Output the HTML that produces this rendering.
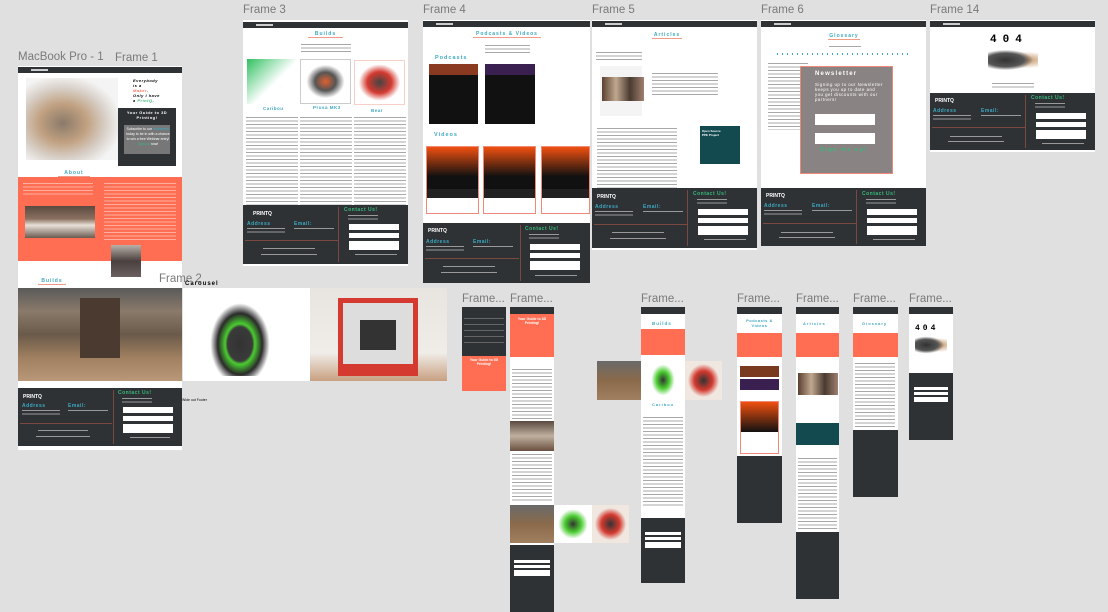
<!DOCTYPE html>
<html><head><meta charset="utf-8"><style>
*{margin:0;padding:0;box-sizing:border-box}
body{width:1108px;height:612px;background:#e0e0e0;position:relative;overflow:hidden;font-family:"Liberation Sans",sans-serif}
.a{position:absolute}
.lbl{position:absolute;font-size:11.5px;color:#7a7a7a;z-index:5}
.w{position:absolute;background:#fff}
.dk{background:#2e3235}
.co{background:#ff6e52}
.hd{position:absolute;left:0;right:0;top:0;height:6px;background:#2e3235}
.hd:after{content:"";position:absolute;left:8%;top:2px;width:10%;height:2px;background:#ccc}
.tx{background:repeating-linear-gradient(#fff 0 1.2px,#a8a8a8 1.2px 2px,#fff 2px 3.5px)}
.txw{background:repeating-linear-gradient(transparent 0 1px,rgba(255,255,255,.45) 1px 2px,transparent 2px 3.5px)}
.ttl{position:absolute;color:#3ea8c2;font-weight:bold;letter-spacing:1px;text-align:center;border-bottom:1px solid #f09a88}
.f{position:absolute;background:#2e3235}
.f .ln{position:absolute;background:#7a4a40}
.f .in{position:absolute;background:#fff}
.f .t{position:absolute;color:#3ea8c2;font-size:5px;font-weight:bold;letter-spacing:.5px}
.f .g{position:absolute;color:#38b87a;font-size:5px;font-weight:bold;letter-spacing:.5px}
.f .s{position:absolute;background:repeating-linear-gradient(transparent 0 1px,#999 1px 1.8px,transparent 1.8px 3.5px)}
.f .logo{position:absolute;color:#fff;font-size:5px;font-weight:bold}
</style></head><body>

<div class="lbl" style="left:18px;top:51px">MacBook Pro - 1</div>
<div class="lbl" style="left:115px;top:52px">Frame 1</div>
<div class="lbl" style="left:243px;top:4px">Frame 3</div>
<div class="lbl" style="left:423px;top:4px">Frame 4</div>
<div class="lbl" style="left:592px;top:4px">Frame 5</div>
<div class="lbl" style="left:761px;top:4px">Frame 6</div>
<div class="lbl" style="left:930px;top:4px">Frame 14</div>
<div class="lbl" style="left:159px;top:273px">Frame 2</div>
<div class="a" style="left:185px;top:281px;font-size:6px;font-weight:bold;letter-spacing:1px;z-index:5">Carousel</div>
<div class="a" style="left:182px;top:398px;font-size:3.5px">Wide out Footer</div>
<div class="lbl" style="left:462px;top:293px">Frame...</div>
<div class="lbl" style="left:510px;top:293px">Frame...</div>
<div class="lbl" style="left:641px;top:293px">Frame...</div>
<div class="lbl" style="left:737px;top:293px">Frame...</div>
<div class="lbl" style="left:796px;top:293px">Frame...</div>
<div class="lbl" style="left:853px;top:293px">Frame...</div>
<div class="lbl" style="left:909px;top:293px">Frame...</div>

<!-- MacBook -->
<div class="w" style="left:18px;top:66px;width:164px;height:222px">
 <div class="hd" style="top:1px"></div>
 <div class="a" style="left:8px;top:12px;width:92px;height:82px;background:radial-gradient(ellipse at 40% 55%,#8a7a6a 0,#c0a080 30%,#d8d0c8 55%,#f4f4f4 75%)"></div>
 <div class="a dk" style="left:100px;top:42px;width:58px;height:58px"></div>
 <div class="a" style="left:106px;top:59px;width:46px;height:29px;background:#777"></div>
 <div class="a" style="left:102px;top:44px;width:54px;font-size:4px;color:#fff;text-align:center;font-weight:bold;letter-spacing:.5px">Your Guide to 3D Printing!</div>
 <div class="a" style="left:107px;top:61px;width:46px;font-size:3.5px;color:#fff;text-align:center;line-height:5px">Subscribe to our <span style="color:#3ea8c2">Newsletter</span> today to be in with a chance to win a free Webinar entry! <span style="color:#38b87a">Sign-up</span> now!</div>
 <div class="a" style="left:115px;top:12px;font-size:4px;font-style:italic;font-weight:bold;line-height:5px;letter-spacing:.5px">Everybody<br>is a<br><span style="color:#ff6e52">Maker</span>.<br>Only I have<br>a <span style="color:#38b87a">PrintQ</span>.</div>
 <div class="ttl" style="left:40px;top:104px;width:32px;font-size:5px">About</div>
 <div class="a co" style="left:0;top:111px;width:164px;height:84px"></div>
 <div class="a txw" style="left:5px;top:116px;width:70px;height:14px"></div>
 <div class="a txw" style="left:86px;top:116px;width:72px;height:60px"></div>
 <div class="a" style="left:7px;top:140px;width:70px;height:32px;background:linear-gradient(#5a4a40,#8a7060 40%,#e8e0d8 60%,#6a5a50)"></div>
 <div class="a" style="left:93px;top:179px;width:30px;height:32px;background:linear-gradient(#b8b0a8,#4a4040 50%,#6a6060)"></div>
 <div class="ttl" style="left:20px;top:212px;width:28px;font-size:5px">Builds</div>
</div>
<div class="a" style="left:18px;top:288px;width:164px;height:93px;background:linear-gradient(#5a5a5a,#8a7a6a 25%,#6a5a4a 50%,#a08060 75%,#b89878)"></div>
<div class="a" style="left:80px;top:298px;width:40px;height:60px;background:#4a3a30"></div>
<div class="w" style="left:18px;top:381px;width:164px;height:69px"></div>
<div class="f" style="left:18px;top:388px;width:164px;height:58px">
 <div class="logo" style="left:5px;top:6px">PRINTQ</div>
 <div class="t" style="left:4px;top:15px">Address</div><div class="t" style="left:50px;top:15px">Email:</div>
 <div class="s" style="left:4px;top:21px;width:38px;height:8px"></div><div class="s" style="left:50px;top:21px;width:40px;height:3px"></div>
 <div class="ln" style="left:2px;top:35px;width:92px;height:1px"></div>
 <div class="ln" style="left:95px;top:2px;width:1px;height:54px"></div>
 <div class="s" style="left:20px;top:41px;width:50px;height:3px"></div><div class="s" style="left:18px;top:47px;width:54px;height:3px"></div>
 <div class="g" style="left:100px;top:2px">Contact Us!</div>
 <div class="s" style="left:104px;top:9px;width:30px;height:8px"></div>
 <div class="in" style="left:105px;top:19px;width:50px;height:6px"></div>
 <div class="in" style="left:105px;top:28px;width:50px;height:5px"></div>
 <div class="in" style="left:105px;top:36px;width:50px;height:9px"></div>
 <div class="s" style="left:112px;top:48px;width:40px;height:3px"></div>
</div>
<!-- Frame 2 -->
<div class="w" style="left:183px;top:288px;width:127px;height:93px"></div>
<div class="a" style="left:205px;top:296px;width:70px;height:80px;background:radial-gradient(ellipse at 50% 60%,#333 0,#3a3a3a 25%,#4acc30 30%,#2a2a2a 45%,#fff 60%)"></div>
<div class="a" style="left:310px;top:288px;width:137px;height:93px;background:linear-gradient(#e8e4e0,#f0ece8 70%,#c8a080)"></div>
<div class="a" style="left:338px;top:298px;width:80px;height:78px;border:5px solid #d43a30;border-bottom-width:12px;background:#ddd"></div>
<div class="a" style="left:360px;top:320px;width:36px;height:30px;background:#333"></div>

<!-- Frame 3 -->
<div class="w" style="left:243px;top:20px;width:165px;height:246px">
 <div class="hd" style="top:2px"></div>
 <div class="ttl" style="left:65px;top:11px;width:35px;font-size:5px">Builds</div>
 <div class="a tx" style="left:58px;top:23px;width:50px;height:10px"></div>
 <div class="a" style="left:4px;top:39px;width:50px;height:45px;background:linear-gradient(135deg,#30c060,#fff 55%)"></div>
 <div class="a" style="left:57px;top:39px;width:51px;height:45px;border:1px solid #ccc;background:radial-gradient(#e06030 0,#555 30%,#fff 55%)"></div>
 <div class="a" style="left:111px;top:40px;width:51px;height:45px;background:radial-gradient(#444 0,#d43a30 35%,#fff 60%);border:1px solid #f8d0c8"></div>
 <div class="a" style="left:20px;top:86px;font-size:4.5px;color:#3ea8c2;font-weight:bold;letter-spacing:.5px">Caribou</div>
 <div class="a" style="left:70px;top:85px;font-size:4.5px;color:#3ea8c2;font-weight:bold;letter-spacing:.5px">Prusa MK3</div>
 <div class="a" style="left:128px;top:88px;font-size:4.5px;color:#3ea8c2;font-weight:bold;letter-spacing:.5px">Bear</div>
 <div class="a tx" style="left:3px;top:96px;width:52px;height:100px"></div>
 <div class="a tx" style="left:57px;top:96px;width:52px;height:100px"></div>
 <div class="a tx" style="left:111px;top:96px;width:52px;height:100px"></div>
</div>
<div class="f" style="left:243px;top:205px;width:165px;height:59px">
 <div class="logo" style="left:10px;top:6px">PRINTQ</div>
 <div class="t" style="left:4px;top:16px">Address</div><div class="t" style="left:51px;top:16px">Email:</div>
 <div class="s" style="left:4px;top:22px;width:38px;height:8px"></div><div class="s" style="left:51px;top:22px;width:40px;height:3px"></div>
 <div class="ln" style="left:2px;top:35px;width:93px;height:1px"></div>
 <div class="ln" style="left:95px;top:2px;width:1px;height:55px"></div>
 <div class="s" style="left:20px;top:42px;width:52px;height:3px"></div><div class="s" style="left:18px;top:48px;width:56px;height:3px"></div>
 <div class="g" style="left:101px;top:2px">Contact Us!</div>
 <div class="s" style="left:105px;top:9px;width:30px;height:8px"></div>
 <div class="in" style="left:106px;top:19px;width:50px;height:6px"></div>
 <div class="in" style="left:106px;top:28px;width:50px;height:5px"></div>
 <div class="in" style="left:106px;top:36px;width:50px;height:9px"></div>
 <div class="s" style="left:112px;top:48px;width:42px;height:3px"></div>
</div>

<!-- Frame 4 -->
<div class="w" style="left:423px;top:20px;width:167px;height:263px">
 <div class="hd" style="top:1px"></div>
 <div class="ttl" style="left:50px;top:11px;width:68px;font-size:5px">Podcasts &amp; Videos</div>
 <div class="a tx" style="left:62px;top:24px;width:45px;height:10px"></div>
 <div class="a" style="left:12px;top:35px;font-size:5.5px;color:#3ea8c2;font-weight:bold;letter-spacing:1px">Podcasts</div>
 <div class="a" style="left:6px;top:44px;width:49px;height:60px;background:linear-gradient(#8a3a20 0 18%,#111 18%)"></div>
 <div class="a" style="left:62px;top:44px;width:50px;height:60px;background:linear-gradient(#3a2050 0 18%,#111 18%)"></div>
 <div class="a" style="left:11px;top:112px;font-size:5.5px;color:#3ea8c2;font-weight:bold;letter-spacing:1px">Videos</div>
 <div class="a" style="left:3px;top:126px;width:53px;height:68px;border:1px solid #f08a78;background:linear-gradient(#f05010,#111 70%,#111 0) top/100% 42px no-repeat,linear-gradient(#222,#222) 0 42px/100% 9px no-repeat,#fff"></div>
 <div class="a" style="left:60px;top:126px;width:53px;height:68px;border:1px solid #f08a78;background:linear-gradient(#f05010,#111 70%,#111 0) top/100% 42px no-repeat,linear-gradient(#222,#222) 0 42px/100% 9px no-repeat,#fff"></div>
 <div class="a" style="left:118px;top:126px;width:49px;height:68px;border:1px solid #f08a78;background:linear-gradient(#f05010,#111 70%,#111 0) top/100% 42px no-repeat,linear-gradient(#222,#222) 0 42px/100% 9px no-repeat,#fff"></div>
</div>
<div class="f" style="left:423px;top:223px;width:167px;height:60px">
 <div class="logo" style="left:5px;top:5px">PRINTQ</div>
 <div class="t" style="left:3px;top:16px">Address</div><div class="t" style="left:50px;top:16px">Email:</div>
 <div class="s" style="left:3px;top:22px;width:38px;height:8px"></div><div class="s" style="left:50px;top:22px;width:40px;height:3px"></div>
 <div class="ln" style="left:2px;top:35px;width:94px;height:1px"></div>
 <div class="ln" style="left:97px;top:2px;width:1px;height:56px"></div>
 <div class="s" style="left:20px;top:42px;width:52px;height:3px"></div><div class="s" style="left:18px;top:48px;width:56px;height:3px"></div>
 <div class="g" style="left:102px;top:3px">Contact Us!</div>
 <div class="s" style="left:106px;top:10px;width:30px;height:8px"></div>
 <div class="in" style="left:107px;top:21px;width:50px;height:6px"></div>
 <div class="in" style="left:107px;top:30px;width:50px;height:5px"></div>
 <div class="in" style="left:107px;top:38px;width:50px;height:9px"></div>
 <div class="s" style="left:112px;top:51px;width:42px;height:3px"></div>
</div>

<!-- Frame 5 -->
<div class="w" style="left:592px;top:20px;width:165px;height:230px">
 <div class="hd" style="top:1px"></div>
 <div class="ttl" style="left:60px;top:12px;width:30px;font-size:5px">Articles</div>
 <div class="a tx" style="left:4px;top:31px;width:46px;height:10px"></div>
 <div class="a" style="left:8px;top:46px;width:42px;height:50px;background:#f4f4f4"></div>
 <div class="a" style="left:10px;top:57px;width:42px;height:24px;background:linear-gradient(90deg,#5a4030,#c0a890,#4a3a30,#a08070)"></div>
 <div class="a tx" style="left:60px;top:52px;width:66px;height:25px"></div>
 <div class="a tx" style="left:5px;top:107px;width:80px;height:75px"></div>
 <div class="a" style="left:108px;top:106px;width:40px;height:38px;background:#124a50"></div>
 <div class="a" style="left:110px;top:109px;font-size:3px;color:#fff;font-weight:bold">Open Source<br>PPE Project</div>
</div>
<div class="f" style="left:592px;top:188px;width:165px;height:60px">
 <div class="logo" style="left:5px;top:6px">PRINTQ</div>
 <div class="t" style="left:3px;top:16px">Address</div><div class="t" style="left:51px;top:16px">Email:</div>
 <div class="s" style="left:3px;top:22px;width:38px;height:8px"></div><div class="s" style="left:51px;top:22px;width:40px;height:3px"></div>
 <div class="ln" style="left:2px;top:36px;width:93px;height:1px"></div>
 <div class="ln" style="left:95px;top:2px;width:1px;height:56px"></div>
 <div class="s" style="left:20px;top:43px;width:52px;height:3px"></div><div class="s" style="left:18px;top:49px;width:56px;height:3px"></div>
 <div class="g" style="left:101px;top:3px">Contact Us!</div>
 <div class="s" style="left:105px;top:10px;width:30px;height:8px"></div>
 <div class="in" style="left:106px;top:21px;width:50px;height:6px"></div>
 <div class="in" style="left:106px;top:30px;width:50px;height:5px"></div>
 <div class="in" style="left:106px;top:38px;width:50px;height:9px"></div>
 <div class="s" style="left:112px;top:50px;width:42px;height:3px"></div>
</div>

<!-- Frame 6 -->
<div class="w" style="left:761px;top:20px;width:165px;height:226px">
 <div class="hd" style="top:1px"></div>
 <div class="ttl" style="left:67px;top:13px;width:32px;font-size:5px">Glossary</div>
 <div class="a tx" style="left:68px;top:25px;width:32px;height:3px"></div>
 <div class="a" style="left:16px;top:33px;width:133px;height:2px;background:repeating-linear-gradient(90deg,#3ea8c2 0 1px,transparent 1px 5px)"></div>
 <div class="a tx" style="left:7px;top:42px;width:40px;height:68px"></div>
 <div class="a" style="left:39px;top:46px;width:93px;height:108px;background:#898483;border:1px solid #f08a78"></div>
 <div class="a" style="left:54px;top:51px;font-size:6px;color:#fff;font-weight:bold;letter-spacing:1.2px">Newsletter</div>
 <div class="a" style="left:54px;top:62px;width:70px;font-size:4.3px;color:#fff;line-height:5px;letter-spacing:.5px">Signing up to our Newsletter keeps you up to date and you get discounts with our partners!</div>
 <div class="a" style="left:54px;top:94px;width:60px;height:11px;background:#fff"></div>
 <div class="a" style="left:54px;top:113px;width:60px;height:11px;background:#fff"></div>
 <div class="a" style="left:59px;top:127px;font-size:5.5px;color:#38b87a;font-weight:bold;letter-spacing:1.5px">Sign me up!</div>
</div>
<div class="f" style="left:761px;top:188px;width:165px;height:58px">
 <div class="logo" style="left:5px;top:5px">PRINTQ</div>
 <div class="t" style="left:3px;top:15px">Address</div><div class="t" style="left:51px;top:15px">Email:</div>
 <div class="s" style="left:3px;top:21px;width:38px;height:8px"></div><div class="s" style="left:51px;top:21px;width:40px;height:3px"></div>
 <div class="ln" style="left:2px;top:35px;width:93px;height:1px"></div>
 <div class="ln" style="left:95px;top:2px;width:1px;height:54px"></div>
 <div class="s" style="left:20px;top:43px;width:52px;height:3px"></div><div class="s" style="left:18px;top:48px;width:56px;height:3px"></div>
 <div class="g" style="left:101px;top:3px">Contact Us!</div>
 <div class="s" style="left:105px;top:10px;width:30px;height:8px"></div>
 <div class="in" style="left:106px;top:21px;width:50px;height:6px"></div>
 <div class="in" style="left:106px;top:30px;width:50px;height:5px"></div>
 <div class="in" style="left:106px;top:38px;width:50px;height:9px"></div>
 <div class="s" style="left:112px;top:50px;width:42px;height:3px"></div>
</div>

<!-- Frame 14 -->
<div class="w" style="left:930px;top:20px;width:165px;height:132px">
 <div class="hd" style="top:1px"></div>
 <div class="a" style="left:60px;top:14px;font-size:11px;font-weight:bold;letter-spacing:6px;font-family:'Liberation Mono',monospace">404</div>
 <div class="a" style="left:58px;top:28px;width:50px;height:24px;background:radial-gradient(ellipse at 35% 50%,#333 0,#555 40%,transparent 60%),radial-gradient(ellipse at 75% 50%,#c09060 0,transparent 50%)"></div>
 <div class="a tx" style="left:62px;top:62px;width:42px;height:6px"></div>
</div>
<div class="f" style="left:930px;top:93px;width:165px;height:57px">
 <div class="logo" style="left:5px;top:5px">PRINTQ</div>
 <div class="t" style="left:3px;top:15px">Address</div><div class="t" style="left:51px;top:15px">Email:</div>
 <div class="s" style="left:3px;top:21px;width:38px;height:8px"></div><div class="s" style="left:51px;top:21px;width:40px;height:3px"></div>
 <div class="ln" style="left:2px;top:34px;width:93px;height:1px"></div>
 <div class="ln" style="left:95px;top:2px;width:1px;height:53px"></div>
 <div class="s" style="left:20px;top:42px;width:52px;height:3px"></div><div class="s" style="left:18px;top:47px;width:56px;height:3px"></div>
 <div class="g" style="left:101px;top:2px">Contact Us!</div>
 <div class="s" style="left:105px;top:9px;width:30px;height:8px"></div>
 <div class="in" style="left:106px;top:20px;width:50px;height:6px"></div>
 <div class="in" style="left:106px;top:29px;width:50px;height:5px"></div>
 <div class="in" style="left:106px;top:37px;width:50px;height:9px"></div>
 <div class="s" style="left:112px;top:49px;width:42px;height:3px"></div>
</div>

<!-- mobile frames -->
<div class="a dk" style="left:462px;top:307px;width:44px;height:84px"></div>
<div class="a" style="left:464px;top:316px;width:40px;height:28px;background:repeating-linear-gradient(transparent 0 2px,#666 2px 2.8px,transparent 2.8px 6px)"></div>
<div class="a co" style="left:462px;top:356px;width:44px;height:35px"></div>
<div class="a" style="left:466px;top:358px;width:36px;font-size:3.5px;color:#fff;font-weight:bold;text-align:center">Your Guide to 3D Printing!</div>

<div class="w" style="left:510px;top:307px;width:44px;height:305px"></div>
<div class="a dk" style="left:510px;top:307px;width:44px;height:7px"></div>
<div class="a co" style="left:510px;top:314px;width:44px;height:43px"></div>
<div class="a" style="left:513px;top:317px;width:38px;font-size:3.5px;color:#fff;font-weight:bold;text-align:center">Your Guide to 3D Printing!</div>
<div class="a tx" style="left:512px;top:368px;width:40px;height:52px"></div>
<div class="a" style="left:510px;top:421px;width:44px;height:30px;background:linear-gradient(#5a4a40,#c0b0a0 50%,#6a5040)"></div>
<div class="a tx" style="left:512px;top:453px;width:40px;height:48px"></div>
<div class="a" style="left:510px;top:505px;width:44px;height:38px;background:linear-gradient(#6a6a6a,#8a6a4a 50%,#a08060)"></div>
<div class="a" style="left:554px;top:505px;width:38px;height:38px;background:radial-gradient(#333 0,#4acc30 30%,#fff 55%)"></div>
<div class="a" style="left:592px;top:505px;width:37px;height:38px;background:radial-gradient(#333 0,#d43a30 35%,#f0e8e0 60%)"></div>
<div class="a dk" style="left:510px;top:545px;width:44px;height:67px"></div>
<div class="a" style="left:514px;top:560px;width:36px;height:3px;background:#fff"></div>
<div class="a" style="left:514px;top:565px;width:36px;height:3px;background:#fff"></div>
<div class="a" style="left:514px;top:570px;width:36px;height:6px;background:#fff"></div>

<div class="a" style="left:597px;top:361px;width:44px;height:39px;background:linear-gradient(#6a6a6a,#8a6a4a 50%,#a08060)"></div>
<div class="w" style="left:641px;top:307px;width:44px;height:276px"></div>
<div class="a dk" style="left:641px;top:307px;width:44px;height:7px"></div>
<div class="a" style="left:652px;top:321px;font-size:4.5px;color:#3ea8c2;font-weight:bold;letter-spacing:1px">Builds</div>
<div class="a co" style="left:641px;top:329px;width:44px;height:26px"></div>
<div class="a" style="left:648px;top:360px;width:30px;height:40px;background:radial-gradient(#333 0,#4acc30 30%,#fff 55%)"></div>
<div class="a" style="left:685px;top:361px;width:37px;height:39px;background:radial-gradient(#333 0,#d43a30 35%,#f0e8e0 60%)"></div>
<div class="a" style="left:652px;top:402px;font-size:4px;color:#3ea8c2;font-weight:bold;letter-spacing:1px">Caribou</div>
<div class="a tx" style="left:643px;top:416px;width:40px;height:90px"></div>
<div class="a dk" style="left:641px;top:518px;width:44px;height:65px"></div>
<div class="a" style="left:645px;top:532px;width:36px;height:3px;background:#fff"></div>
<div class="a" style="left:645px;top:537px;width:36px;height:3px;background:#fff"></div>
<div class="a" style="left:645px;top:542px;width:36px;height:6px;background:#fff"></div>

<div class="w" style="left:737px;top:307px;width:45px;height:216px"></div>
<div class="a dk" style="left:737px;top:307px;width:45px;height:7px"></div>
<div class="a" style="left:738px;top:318px;width:43px;font-size:4px;color:#3ea8c2;font-weight:bold;text-align:center;letter-spacing:.5px">Podcasts &amp; Videos</div>
<div class="a co" style="left:737px;top:333px;width:45px;height:24px"></div>
<div class="a" style="left:740px;top:366px;width:39px;height:11px;background:#7a3a20"></div>
<div class="a" style="left:740px;top:379px;width:39px;height:11px;background:#3a2050"></div>
<div class="a" style="left:740px;top:401px;width:39px;height:53px;border:1px solid #f08a78;background:linear-gradient(#f05010,#111) top/100% 30px no-repeat,#fff"></div>
<div class="a dk" style="left:737px;top:456px;width:45px;height:67px"></div>

<div class="w" style="left:796px;top:307px;width:43px;height:292px"></div>
<div class="a dk" style="left:796px;top:307px;width:43px;height:7px"></div>
<div class="a" style="left:803px;top:321px;font-size:4px;color:#3ea8c2;font-weight:bold;letter-spacing:1px">Articles</div>
<div class="a co" style="left:796px;top:333px;width:43px;height:24px"></div>
<div class="a" style="left:798px;top:373px;width:40px;height:22px;background:linear-gradient(90deg,#5a4030,#c0a890,#4a3a30,#a08070)"></div>
<div class="a" style="left:796px;top:423px;width:43px;height:22px;background:#124a50"></div>
<div class="a tx" style="left:798px;top:457px;width:39px;height:74px"></div>
<div class="a dk" style="left:796px;top:532px;width:43px;height:67px"></div>

<div class="w" style="left:853px;top:307px;width:45px;height:190px"></div>
<div class="a dk" style="left:853px;top:307px;width:45px;height:7px"></div>
<div class="a" style="left:862px;top:321px;font-size:4px;color:#3ea8c2;font-weight:bold;letter-spacing:1px">Glossary</div>
<div class="a co" style="left:853px;top:333px;width:45px;height:24px"></div>
<div class="a tx" style="left:855px;top:362px;width:40px;height:66px"></div>
<div class="a dk" style="left:853px;top:430px;width:45px;height:67px"></div>

<div class="w" style="left:909px;top:307px;width:44px;height:133px"></div>
<div class="a dk" style="left:909px;top:307px;width:44px;height:7px"></div>
<div class="a" style="left:915px;top:324px;font-size:8px;font-weight:bold;letter-spacing:3px;font-family:'Liberation Mono',monospace">404</div>
<div class="a" style="left:915px;top:335px;width:32px;height:20px;background:radial-gradient(ellipse at 35% 50%,#333 0,#555 40%,transparent 60%),radial-gradient(ellipse at 75% 50%,#c09060 0,transparent 50%)"></div>
<div class="a dk" style="left:909px;top:373px;width:44px;height:67px"></div>
<div class="a" style="left:914px;top:387px;width:34px;height:3px;background:#fff"></div>
<div class="a" style="left:914px;top:392px;width:34px;height:3px;background:#fff"></div>
<div class="a" style="left:914px;top:397px;width:34px;height:5px;background:#fff"></div>
</body></html>
